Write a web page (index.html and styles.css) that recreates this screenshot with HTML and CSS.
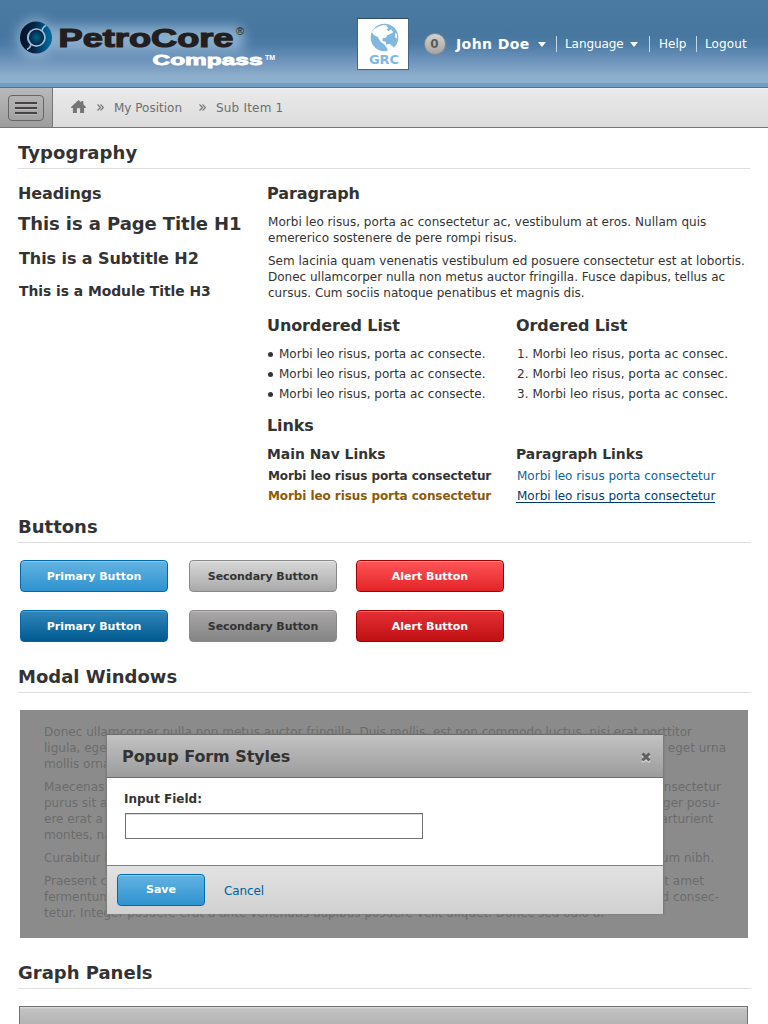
FILE: index.html
```html
<!DOCTYPE html>
<html lang="en">
<head>
<meta charset="utf-8">
<title>PetroCore Compass</title>
<link rel="stylesheet" href="styles.css">
</head>
<body>
<header class="header">
  <svg class="logo" width="300" height="84" viewBox="0 0 300 84">
    <defs>
      <linearGradient id="ring" x1="0" x2="1"><stop offset="0" stop-color="#07142c"/><stop offset=".45" stop-color="#06284a"/><stop offset="1" stop-color="#00669a"/></linearGradient>
      <radialGradient id="core"><stop offset="0" stop-color="#00648c"/><stop offset="1" stop-color="#071c3c"/></radialGradient>
      <filter id="glow" x="-20%" y="-60%" width="140%" height="220%"><feGaussianBlur stdDeviation="6"/></filter>
    </defs>
    <g filter="url(#glow)" opacity=".48" fill="#cfe6fb"><circle cx="36" cy="38" r="19"/><rect x="50" y="26" width="194" height="25" rx="8"/></g>
    <circle cx="36" cy="37.500" r="12.500" fill="none" stroke="url(#ring)" stroke-width="7"/>
    <circle cx="36.500" cy="37.500" r="8.500" fill="url(#core)" stroke="#9cc0dc" stroke-width="1.700"/>
    <path d="M42 31q.5-4 4-5.500M31 44q-.5 4-4 5.500" fill="none" stroke="#9cc0dc" stroke-width="1.600"/>
    <text class="logo-name" x="58.500" y="46.500" textLength="175" lengthAdjust="spacingAndGlyphs">PetroCore</text>
    <text class="logo-reg" x="236" y="35">®</text>
    <text class="logo-sub" x="152.500" y="64.500" textLength="110" lengthAdjust="spacingAndGlyphs">Compass</text>
    <text class="logo-tm" x="265" y="60" textLength="10">TM</text>
  </svg>
  <div class="user">
    <div class="grc">
      <svg width="29" height="29" viewBox="0 0 30 29"><circle cx="15" cy="14.500" r="14.300" fill="#82b7e0"/><path fill="#fff" d="M4 6L9 3l5-1.500 3 .5 2 3-2 1 2 2 3-2 2 3-3 2-3 1-2 3-3 0 0 3 3 1 1 3 3-1 4 3 1 2-3 4-4 2 0-6-3-4-4-3-3-5-4-2-2-3zM26 10l2 1 0 5-2-2z"/></svg>
      <b>GRC</b>
    </div>
    <span class="count">0</span>
    <b class="name">John Doe</b><i class="caret"></i>
    <span class="item lang">Language<i class="caret"></i></span>
    <span class="item help">Help</span>
    <span class="item out">Logout</span>
  </div>
</header>
<nav class="crumbs">
  <div class="menu"><div class="menu-btn"><i></i><i></i><i></i></div></div>
  <svg class="home" width="15" height="13" viewBox="0 0 16 14"><path fill="#757575" d="M8 0l3 2.700V1h2.200v3.700L16 7.500v1h-2V14H9.700V9H6.300v5H2V8.500H0v-1z"/></svg>
  <svg class="sep" width="7" height="7" viewBox="0 0 7 7"><path d="M.5.5l3 3-3 3M3.500.5l3 3-3 3" fill="none" stroke="#777" stroke-width="1.200"/></svg>
  <span class="c1">My Position</span>
  <svg class="sep" width="7" height="7" viewBox="0 0 7 7"><path d="M.5.5l3 3-3 3M3.500.5l3 3-3 3" fill="none" stroke="#777" stroke-width="1.200"/></svg>
  <span class="c2">Sub Item 1</span>
</nav>
<main class="page">
  <h1 class="section">Typography</h1>
  <div class="typo">
    <div class="heads">
      <h2 class="t2">Headings</h2>
      <p class="s1">This is a Page Title H1</p>
      <p class="s2">This is a Subtitle H2</p>
      <p class="s3">This is a Module Title H3</p>
    </div>
    <div class="texts">
      <h2 class="t2">Paragraph</h2>
      <p class="para first">Morbi leo risus, porta ac consectetur ac, vestibulum at eros. Nullam quis<br>emererico sostenere de pere rompi risus.</p>
      <p class="para">Sem lacinia quam venenatis vestibulum ed posuere consectetur est at lobortis.<br>Donec ullamcorper nulla non metus auctor fringilla. Fusce dapibus, tellus ac<br>cursus. Cum sociis natoque penatibus et magnis dis.</p>
      <div class="pair lists">
        <div><h2 class="t2">Unordered List</h2>
          <ul class="list"><li><i class="dot"></i>Morbi leo risus, porta ac consecte.</li><li><i class="dot"></i>Morbi leo risus, porta ac consecte.</li><li><i class="dot"></i>Morbi leo risus, porta ac consecte.</li></ul></div>
        <div><h2 class="t2">Ordered List</h2>
          <ul class="list ordered"><li>1. Morbi leo risus, porta ac consec.</li><li>2. Morbi leo risus, porta ac consec.</li><li>3. Morbi leo risus, porta ac consec.</li></ul></div>
      </div>
      <h2 class="t2 links-title">Links</h2>
      <div class="pair">
        <div><h3 class="t3">Main Nav Links</h3><a class="nav-link">Morbi leo risus porta consectetur</a><a class="nav-link on">Morbi leo risus porta consectetur</a></div>
        <div><h3 class="t3">Paragraph Links</h3><a class="p-link">Morbi leo risus porta consectetur</a><a class="p-link on">Morbi leo risus porta consectetur</a></div>
      </div>
    </div>
  </div>
  <h1 class="section shifted">Buttons</h1>
  <div class="buttons">
    <span class="btn primary">Primary Button</span><span class="btn secondary">Secondary Button</span><span class="btn alert">Alert Button</span>
    <span class="btn primary down">Primary Button</span><span class="btn secondary down">Secondary Button</span><span class="btn alert down">Alert Button</span>
  </div>
  <h1 class="section shifted">Modal Windows</h1>
  <div class="backdrop">
    <p><span class="wide">Donec ullamcorper nulla non metus auctor fringilla. Duis mollis, est non commodo luctus, nisi erat porttitor</span><br><span class="row"><span>ligula, eget</span><span class="e1">eget urna</span></span><span class="row"><span>mollis ornare</span></span></p>
    <p><span class="row"><span>Maecenas</span><span class="e2">consectetur</span></span><span class="row"><span>purus sit a</span><span class="e3">ger posu-</span></span><span class="row"><span>ere erat a</span><span class="e4">parturient</span></span><span class="row"><span>montes, na</span></span></p>
    <p><span class="row"><span>Curabitur b</span><span class="e5">um nibh.</span></span></p>
    <p><span class="row"><span>Praesent co</span><span class="e6">t amet</span></span><span class="row"><span>fermentum</span><span class="e7">d consec-</span></span><span class="wide">tetur. Integer posuere erat a ante venenatis dapibus posuere velit aliquet. Donec sed odio d.</span></p>
    <section class="modal">
      <div class="modal-head"><h2>Popup Form Styles</h2><svg width="10" height="11" viewBox="0 0 10 11"><path d="M1.500 3l7 7m0-7l-7 7" stroke="#ddd" stroke-width="3"/><path d="M1.500 1.500l7 7m0-7l-7 7" stroke="#606060" stroke-width="3"/></svg></div>
      <div class="modal-body"><label>Input Field:</label><div class="input"></div></div>
      <div class="modal-foot"><span class="btn primary save">Save</span><a>Cancel</a></div>
    </section>
  </div>
  <h1 class="section shifted">Graph Panels</h1>
  <div class="panel"></div>
</main>
</body>
</html>
```
FILE: styles.css
```css
* { box-sizing: border-box; }
body { margin: 0; height: 1024px; overflow: hidden; background: #fff; color: #333; font: 12px/16px "DejaVu Sans", Verdana, sans-serif; }
h1, h2, h3, p, ul { margin: 0; padding: 0; }
ul { list-style: none; }
.header { height: 88px; display: flex; background: linear-gradient(#4a79a2 0, #47769f 35px, #4d7ca6 45px, #7096bd 62px, #8cadcb 76px, #8fb0cd 83px, #739ec4 83px, #6e9ac1 87px, #6b6b6b 87px); }
.logo { flex: none; margin-right: 57px; }
.logo text { font-family: "Liberation Sans", Arial, sans-serif; font-weight: bold; }
.logo .logo-name { font-size: 25px; fill: #231f20; stroke: #231f20; stroke-width: 1.2px; }
.logo .logo-reg { font-size: 11px; font-weight: normal; fill: #231f20; }
.logo .logo-sub { font-size: 14.500px; fill: #fff; stroke: #fff; stroke-width: .8px; }
.logo .logo-tm { font-size: 7px; fill: #fff; }
.user { display: flex; align-items: center; height: 88px; color: #fff; }
.grc { width: 52px; height: 52px; border: 1px solid; border-color: #2c4c68 #3e678c #3e678c; background: #fff; display: flex; flex-direction: column; align-items: center; padding: 4px 0 0 2px; }
.grc b { color: #82b7e0; font-size: 13px; line-height: 15px; }
.count { width: 22px; height: 22px; margin-left: 14.500px; border-radius: 50%; border: 1px solid #8a8a8a; background: linear-gradient(#d2d2d2, #a5a5a5); color: #5a5a5a; font: bold 12px/20px "DejaVu Sans", sans-serif; text-align: center; }
.name { font-size: 14px; margin-left: 10.500px; white-space: nowrap; width: 73px; letter-spacing: .4px; }
.caret { display: inline-block; border: 4px solid transparent; border-top: 5px solid #fff; border-bottom: 0; margin-left: 9px; }
.lang .caret { margin-left: 6px; margin-bottom: 1px; }
.item { height: 16px; border-left: 1px solid #c6d6e5; white-space: nowrap; line-height: 16px; padding-left: 8px; }
.lang { width: 93px; margin-left: 10px; letter-spacing: -.07px; }
.help { width: 47px; padding-left: 9px; }
.out { letter-spacing: .1px; }
.crumbs { height: 40px; display: flex; align-items: center; border-bottom: 1px solid #767676; background: linear-gradient(#f4f4f4 0, #e9e9e9 2px, #dcdcdc); color: #6e6e6e; }
.menu { width: 53px; height: 39px; border-right: 1px solid #767676; background: linear-gradient(#b9b9b9, #9d9d9d); padding: 7px 8px; }
.menu-btn { width: 36px; height: 26px; border: 1px solid #666; border-radius: 4px; display: flex; flex-direction: column; align-items: center; justify-content: center; gap: 3px; }
.menu-btn i { width: 22px; height: 2px; background: #474344; box-shadow: 0 1px #bbb; }
.home { margin: -2px 11px 0 18px; }
.c1 { width: 69px; margin: 0 16px 0 10px; white-space: nowrap; }
.c2 { margin-left: 10px; white-space: nowrap; letter-spacing: .2px; }
.page { padding: 0 18px; }
.section { font-size: 18px; line-height: 26px; height: 29px; border-bottom: 1px solid #dedede; }
.section:first-child { margin-top: 12px; letter-spacing: .08px; }
.section.shifted { margin-right: -1px; }
.typo { display: flex; margin-top: 13px; height: 332px; }
.heads { width: 249px; flex: none; white-space: nowrap; }
.texts { flex: 1; white-space: nowrap; }
.t2 { font-size: 16px; line-height: 24px; height: 22px; letter-spacing: -.1px; }
.t3 { font-size: 13.900px; line-height: 20px; }
.s1 { font-weight: bold; font-size: 18px; line-height: 24px; margin-top: 8px; letter-spacing: -.08px; }
.s2 { font-weight: bold; font-size: 16px; line-height: 24px; height: 22px; margin: 11px 0 0 1px; letter-spacing: -.08px; }
.s3 { font-weight: bold; font-size: 13.900px; line-height: 20px; margin: 12px 0 0 1px; letter-spacing: -.04px; }
.para { margin: 7px 0 0 1px; }
.para.first { margin-top: 10px; letter-spacing: .035px; }
.pair { display: grid; grid-template-columns: 249px 1fr; }
.lists { margin-top: 13px; }
.list { line-height: 20px; margin: 8px 0 0 1px; }
.list li { height: 20px; }
.ordered { letter-spacing: .04px; }
.dot { display: inline-block; width: 5px; height: 5px; border-radius: 50%; background: #333; margin: 0 6px 1px 0; }
.links-title { margin: 10px 0 8px; }
.nav-link, .p-link { display: block; width: max-content; line-height: 20px; height: 20px; margin-left: 1px; }
.t3 + a { margin-top: 2px; }
.nav-link { font-weight: bold; letter-spacing: -.08px; }
.nav-link.on { color: #8d5a0b; }
.p-link { color: #0e639c; }
.p-link.on { color: #003e68; height: 17px; border-bottom: 1px solid #003e68; margin-left: 0; padding-left: 1px; }
.buttons { display: grid; grid-template-columns: 169px 167px 148px; row-gap: 18px; margin: 17px 0 22px 2px; }
.btn { width: 148px; height: 32px; border-radius: 4px; border: 1px solid #0069aa; color: #fff; font-size: 11px; font-weight: bold; line-height: 31px; text-align: center; }
.primary { background: linear-gradient(#63b3e2, #2e93d0); box-shadow: inset 0 1px #8dc8eb; }
.primary.down { background: linear-gradient(#3287b9, #005a90); box-shadow: inset 0 1px #5c9fc7; }
.secondary { border-color: #8a8a8a; color: #333; background: linear-gradient(#d8d8d8, #a9a9a9); box-shadow: inset 0 1px #e5e5e5; letter-spacing: -.05px; }
.secondary.down { background: linear-gradient(#aaa8a9, #848484); box-shadow: inset 0 1px #bdbdbd; }
.alert { border-color: #a40000; background: linear-gradient(#ff5558, #e32427); box-shadow: inset 0 1px #ff8c8e; }
.alert.down { background: linear-gradient(#e53034, #c01014); box-shadow: inset 0 1px #f06b6e; }
.backdrop { position: relative; margin: 17px 2px 22px; height: 228px; background: #8b8b8b; color: #6b6b6b; padding: 14px 0 0 24px; white-space: nowrap; overflow: hidden; }
.backdrop p { margin-bottom: 7px; }
.wide { letter-spacing: .03px; }
.row { display: flex; justify-content: space-between; height: 16px; }
.e1 { margin-right: 22px; }
.e2 { margin-right: 27px; }
.e3 { margin-right: 28px; }
.e4 { margin-right: 35px; }
.e5 { margin-right: 34px; }
.e6 { margin-right: 44px; }
.e7 { margin-right: 29px; }
.modal { position: absolute; left: 86px; top: 24px; width: 558px; height: 180px; border-left: 1px solid #7c7c7c; border-right: 1px solid #7c7c7c; color: #333; box-shadow: 0 0 2px #777; }
.modal-head { height: 44px; border-top: 1px solid #6c6c6c; border-bottom: 1px solid #6c6c6c; background: linear-gradient(#c2c2c2, #9c9c9c); display: flex; align-items: center; justify-content: space-between; padding: 2px 12px 0 15px; }
.modal-head h2 { font-size: 16px; line-height: 22px; letter-spacing: -.07px; }
.modal-body { height: 87px; background: #fff; padding: 13px 17px; }
.modal-body label { display: block; font-weight: bold; font-size: 12px; }
.input { width: 298px; height: 26px; margin: 6px 0 0 1px; border: 1px solid #707070; box-shadow: inset 0 1px #ddd; }
.modal-foot { height: 49px; border-top: 1px solid #808080; background: linear-gradient(#e2e2e2, #d0d0d0); padding: 8px 10px; display: flex; align-items: center; }
.save { width: 88px; line-height: 29px; }
.modal-foot a { color: #00609c; margin: 2px 0 0 19px; letter-spacing: -.1px; }
.panel { height: 40px; margin: 17px 2px 0 1px; border: 1px solid #707070; background: linear-gradient(#e0e0e0 0, #c2c2c2 2px, #a0a0a0); }
```
